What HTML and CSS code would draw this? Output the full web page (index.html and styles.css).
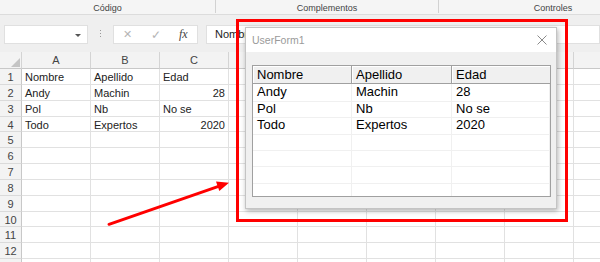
FILE: index.html
```html
<!DOCTYPE html>
<html lang="es">
<head>
    <meta charset="UTF-8">
    <title>UserForm1 - ListBox</title>
    <link rel="stylesheet" href="styles.css">
</head>
<body>
    <!-- Cinta de opciones (recortada) -->
    <div class="ribbon">
        <div class="group g-codigo"><span>Código</span></div>
        <div class="group g-compl"><span>Complementos</span></div>
        <div class="group g-ctrl"><span>Controles</span></div>
    </div>

    <!-- Barra de fórmulas -->
    <div class="formula-bar">
        <div class="name-box"><span class="caret"></span></div>
        <div class="grip"><i></i><i></i><i></i></div>
        <div class="fx-box">
            <span class="btn-cancel">✕</span>
            <span class="btn-enter">✓</span>
            <span class="btn-fx">fx</span>
        </div>
        <div class="formula">Nombre</div>
    </div>

    <!-- Hoja de cálculo -->
    <div class="sheet" id="sheet"></div>

    <!-- Formulario -->
    <div class="userform">
        <div class="uf-title">
            <span>UserForm1</span>
            <svg class="uf-close" width="10" height="10" viewBox="0 0 10 10">
                <path d="M0.5 0.5 L9.5 9.5 M9.5 0.5 L0.5 9.5" stroke="#8a8a8a" stroke-width="1" fill="none"/>
            </svg>
        </div>
        <div class="uf-body">
            <div class="listbox" id="listbox">
                <div class="lb-row lb-head">
                    <div class="lb-cell">Nombre</div>
                    <div class="lb-cell">Apellido</div>
                    <div class="lb-cell">Edad</div>
                </div>
            </div>
        </div>
    </div>

    <div class="highlight"></div>
    <svg class="arrow" width="600" height="262" viewBox="0 0 600 262">
        <line x1="109" y1="224.3" x2="218.5" y2="186.4" stroke="#ff0000" stroke-width="3" stroke-linecap="round"/>
        <polygon points="229,182.7 219.3,191 216,181.6" fill="#ff0000"/>
    </svg>

    <script>
        // Datos de la hoja
        let datos = [
            ['Nombre', 'Apellido', 'Edad'],
            ['Andy', 'Machin', 28],
            ['Pol', 'Nb', 'No se'],
            ['Todo', 'Expertos', 2020]
        ];
        // la columna I queda fuera de la vista
        let letras = ['', 'A', 'B', 'C', 'D', 'E', 'F', 'G', 'H', ''];

        // Construir la hoja
        let sheet = document.getElementById('sheet');
        let html = '';
        letras.forEach(function (l, i) {
            html += i === 0
                ? '<div class="col-head corner"><span class="tri"></span></div>'
                : '<div class="col-head">' + l + '</div>';
        });
        for (let r = 1; r <= 13; r++) {
            // la fila 13 apenas asoma, sin número visible
            html += '<div class="row-head">' + (r < 13 ? r : '') + '</div>';
            for (let c = 0; c < 9; c++) {
                let v = datos[r - 1] ? datos[r - 1][c] : undefined;
                if (v === undefined) v = '';
                let num = typeof v === 'number' ? ' num' : '';
                html += '<div class="cell' + num + '">' + v + '</div>';
            }
        }
        sheet.innerHTML = html;

        // Llenar el ListBox
        let listbox = document.getElementById('listbox');
        for (let r = 1; r <= 7; r++) {
            let fila = datos[r] || ['', '', ''];
            listbox.innerHTML += '<div class="lb-row">' +
                '<div class="lb-cell">' + fila[0] + '</div>' +
                '<div class="lb-cell">' + fila[1] + '</div>' +
                '<div class="lb-cell">' + fila[2] + '</div></div>';
        }
    </script>
</body>
</html>
```

FILE: styles.css
```css
/* Estilos básicos */
body {
    margin: 0;
    width: 600px;
    height: 262px;
    overflow: hidden;
    position: relative;
    font-family: "Liberation Sans", Arial, sans-serif;
    background: #fff;
}

/* Cinta */
.ribbon {
    display: flex;
    height: 14px;
    background: #f5f5f5;
    border-bottom: 1px solid #dcdcdc;
}
.group {
    flex: none;
    display: flex;
    justify-content: center;
    font-size: 9px;
    color: #444;
    line-height: 14px;
    padding-top: 1px;
    box-sizing: border-box;
    border-right: 1px solid #d2d2d2;
    height: 13px;
}
.g-codigo { width: 216px; }
.g-compl { width: 223px; }
.g-ctrl { width: 228px; border-right: none; }

/* Barra de fórmulas */
.formula-bar {
    display: flex;
    align-items: flex-start;
    height: 37px;
    padding-top: 10px;
    box-sizing: border-box;
    background: #efefef;
}
.name-box {
    width: 84px;
    height: 19px;
    margin-left: 4px;
    background: #fff;
    border: 1px solid #e0e0e0;
    box-sizing: border-box;
    position: relative;
}
.caret {
    position: absolute;
    right: 6px;
    top: 8px;
    border-left: 3px solid transparent;
    border-right: 3px solid transparent;
    border-top: 3px solid #555;
}
.grip {
    width: 25px;
    display: flex;
    flex-direction: column;
    align-items: center;
    gap: 2px;
    padding-top: 5px;
}
.grip i {
    width: 1px;
    height: 1px;
    background: #999;
}
.fx-box {
    width: 85px;
    height: 19px;
    background: #fff;
    border: 1px solid #e0e0e0;
    box-sizing: border-box;
    display: flex;
    align-items: center;
    font-size: 12px;
}
.btn-cancel {
    color: #b5b5b5;
    margin-left: 9px;
    font-size: 11px;
}
.btn-enter {
    color: #b5b5b5;
    margin-left: 19px;
    font-size: 12px;
}
.btn-fx {
    margin-left: 18px;
    font-family: "Liberation Serif", serif;
    font-style: italic;
    color: #444;
    font-size: 12px;
}
.formula {
    flex: 1;
    height: 19px;
    margin-left: 8px;
    background: #fff;
    border: 1px solid #e0e0e0;
    box-sizing: border-box;
    font-size: 11px;
    line-height: 17px;
    padding-left: 8px;
    color: #222;
}

/* Hoja */
.sheet {
    display: grid;
    grid-template-columns: 22px repeat(9, 69px);
    grid-template-rows: 17px;
    grid-auto-rows: 15.85px;
    font-size: 11px;
    color: #222;
}
.col-head {
    background: #f3f3f3;
    border-right: 1px solid #d4d4d4;
    border-bottom: 1px solid #c8c8c8;
    text-align: center;
    line-height: 16px;
    color: #444;
    box-sizing: border-box;
}
.corner {
    position: relative;
}
.tri {
    position: absolute;
    right: 1px;
    bottom: 1px;
    border-left: 9px solid transparent;
    border-bottom: 9px solid #c4c4c4;
}
.row-head {
    background: #f3f3f3;
    border-right: 1px solid #c8c8c8;
    border-bottom: 1px solid #dadada;
    text-align: center;
    line-height: 16px;
    color: #444;
    box-sizing: border-box;
}
.cell {
    border-right: 1px solid #e1e1e1;
    border-bottom: 1px solid #e1e1e1;
    box-sizing: border-box;
    line-height: 16px;
    padding-left: 3px;
    white-space: nowrap;
    overflow: hidden;
}
.cell.num {
    text-align: right;
    padding-right: 3px;
}

/* UserForm */
.userform {
    position: absolute;
    left: 245px;
    top: 27px;
    width: 312px;
    height: 182px;
    box-sizing: border-box;
    border: 1px solid #c4c4c4;
    background: #f0f0f0;
    box-shadow: 1px 2px 5px rgba(0, 0, 0, 0.3);
    display: flex;
    flex-direction: column;
}
.uf-title {
    height: 24px;
    background: #fff;
    display: flex;
    align-items: center;
    justify-content: space-between;
    padding: 0 9px 0 6px;
    font-size: 10.5px;
    color: #9a9a9a;
}
.uf-body {
    flex: 1;
    padding: 13px 0 0 6px;
}
.listbox {
    width: 299px;
    height: 132px;
    box-sizing: border-box;
    border: 1px solid #a0a0a0;
    background: #fff;
    overflow: hidden;
    font-size: 13px;
    color: #000;
}
.lb-row {
    display: grid;
    grid-template-columns: 99px 100px 1fr;
    height: 16.7px;
}
.lb-cell {
    padding-left: 4px;
    line-height: 16.7px;
    border-right: 1px solid #f0f0f0;
    border-bottom: 1px solid #f0f0f0;
    box-sizing: border-box;
    white-space: nowrap;
}
.lb-head {
    height: 18px;
}
.lb-head .lb-cell {
    line-height: 17px;
    background: #f0f0f0;
    border-right: 1px solid #a0a0a0;
    border-bottom: 1px solid #a0a0a0;
    box-shadow: inset 1px 1px 0 #fff;
}
.lb-head .lb-cell:last-child {
    border-right: none;
}

/* Marcas rojas */
.highlight {
    position: absolute;
    left: 236px;
    top: 19px;
    width: 332px;
    height: 203px;
    box-sizing: border-box;
    border: 3px solid #ff0000;
}
.arrow {
    position: absolute;
    left: 0;
    top: 0;
    pointer-events: none;
}
```
